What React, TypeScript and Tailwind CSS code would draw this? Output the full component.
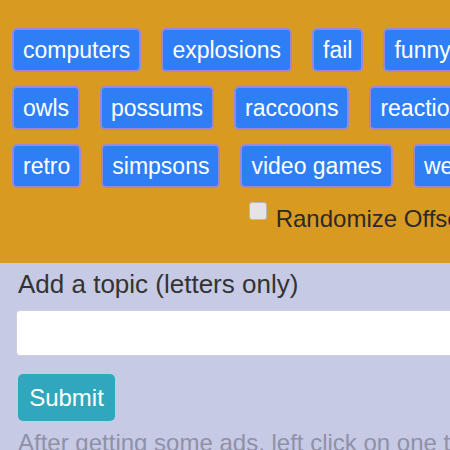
import React from "react";

const rows: string[][] = [
  ["computers", "explosions", "fail", "funny", "memes"],
  ["owls", "possums", "raccoons", "reactions", "random"],
  ["retro", "simpsons", "video games", "weird", "wow"],
];

function Topic({ label }: { label: string }) {
  return (
    <button className="h-[44px] px-[9px] flex items-center shrink-0 rounded-[5px] bg-[#2e7ff6] border-2 border-[#9d86d8] text-white text-[23px] leading-none whitespace-nowrap">
      {label}
    </button>
  );
}

export default function App() {
  return (
    <div className="w-[450px] h-[450px] overflow-hidden bg-[#c6cae4]" style={{ fontFamily: '"Liberation Sans", Arial, sans-serif' }}>
      <div className="w-[728px]">
        <div className="bg-[#d99a22] pt-[28px] pb-[33px] px-[12px]">
          <div className="flex flex-col gap-[14px]">
            {rows.map((r, i) => (
              <div key={i} className="flex gap-[20px]">
                {r.map((t) => (
                  <Topic key={t} label={t} />
                ))}
              </div>
            ))}
          </div>
          <div className="mt-[14px] flex items-start justify-center gap-[9px] h-[28px]">
            <span className="w-[18px] h-[18px] rounded-[3px] bg-[#e4e4e4] border border-[#b8b8b8] shrink-0" />
            <span className="mt-[5px] text-[24px] leading-none text-[#2a2a2a] whitespace-nowrap">Randomize Offsets</span>
          </div>
        </div>
        <div className="px-[16px] pt-[7px]">
          <div className="pl-[2px] text-[26px] leading-[29px] text-[#333] whitespace-nowrap">Add a topic (letters only)</div>
          <input type="text" className="mt-[11px] w-full h-[46px] bg-white border border-[#cfd0dc] rounded-[4px] block" />
          <button className="mt-[18px] ml-[2px] w-[97px] h-[47px] rounded-[5px] bg-[#31a7bd] text-white text-[24px] leading-none flex items-center justify-center">
            Submit
          </button>
          <div className="mt-[8px] pl-[2px] text-[24px] leading-[28px] text-[#8f91a8] whitespace-nowrap">
            After getting some ads, left click on one to see more
          </div>
        </div>
      </div>
    </div>
  );
}
